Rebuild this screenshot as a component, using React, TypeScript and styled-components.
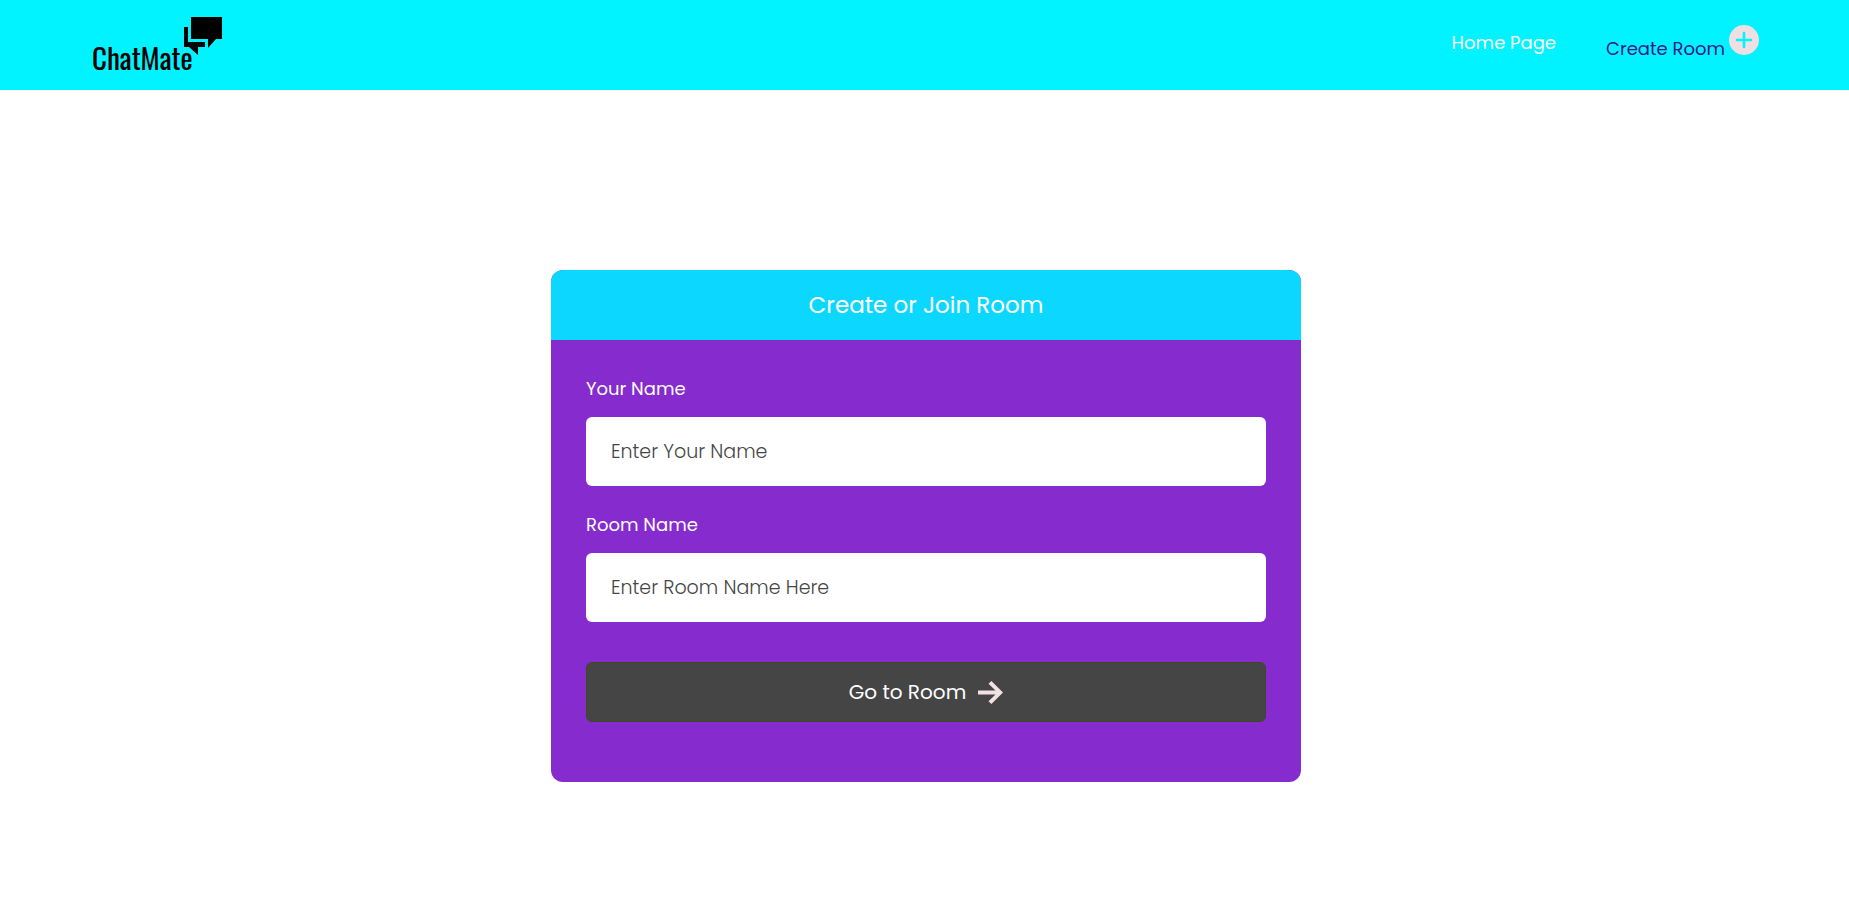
import React from "react";
import styled, { createGlobalStyle } from "styled-components";

const GlobalStyle = createGlobalStyle`
  *, *::before, *::after { box-sizing: border-box; }
  body {
    margin: 0;
    background: #ffffff;
    font-family: Poppins, Inter, sans-serif;
    font-size: 18px;
    line-height: 24px;
  }
`;

const Header = styled.header`
  display: flex;
  align-items: center;
  justify-content: space-between;
  height: 90px;
  padding: 0 90px 0 92px;
  background: #00f3ff;
`;

const Logo = styled.a`
  display: flex;
  align-items: flex-start;
  padding-top: 2px;
  color: #000000;
  text-decoration: none;
`;

const LogoText = styled.span`
  margin-top: 22px;
  font-family: Oswald, "Liberation Sans Narrow", "Liberation Sans", sans-serif;
  font-size: 29px;
  line-height: 36px;
`;

const LogoMark = styled.svg`
  width: 38px;
  height: 38px;
  margin-left: -9px;
`;

const Nav = styled.nav`
  display: flex;
  align-items: center;
  gap: 50px;
  padding-bottom: 4px;
`;

const NavLink = styled.a<{ $tone: string }>`
  display: flex;
  align-items: flex-end;
  gap: 4px;
  color: ${({ $tone }) => $tone};
  text-decoration: none;
  white-space: nowrap;
`;

const PlusBadge = styled.svg`
  width: 30px;
  height: 30px;
  margin-bottom: 6px;
`;

const Main = styled.main`
  display: flex;
  justify-content: center;
  padding: 180px 16px 64px 19px;
`;

const Card = styled.section`
  width: 100%;
  max-width: 750px;
  border-radius: 12px;
  overflow: hidden;
  background: #862bcd;
`;

const CardTitle = styled.h1`
  margin: 0;
  padding: 20px 24px;
  background: #0cd7ff;
  color: #ffffff;
  font-size: 23px;
  font-weight: 400;
  line-height: 30px;
  text-align: center;
`;

const Form = styled.form`
  display: flex;
  flex-direction: column;
  padding: 37px 35px 60px;
`;

const Field = styled.div`
  display: flex;
  flex-direction: column;
  gap: 16px;
  margin-bottom: 27px;
`;

const Label = styled.label`
  color: #ffffff;
`;

const TextInput = styled.input`
  width: 100%;
  height: 69px;
  padding: 0 25px;
  border: 0;
  border-radius: 6px;
  background: #ffffff;
  color: #454545;
  font-family: inherit;
  font-size: 19px;
  font-weight: 300;

  &::placeholder {
    color: #454545;
    opacity: 1;
  }
`;

const SubmitButton = styled.button`
  display: flex;
  align-items: center;
  justify-content: center;
  gap: 12px;
  height: 60px;
  margin-top: 13px;
  border: 1px solid #3c4a22;
  border-radius: 6px;
  background: #454545;
  color: #ffffff;
  font-family: inherit;
  font-size: 20px;
  cursor: pointer;
`;

const Arrow = styled.svg`
  width: 25px;
  height: 23px;
`;

export default function App() {
  return (
    <>
      <GlobalStyle />
      <Header>
        <Logo href="#">
          <LogoText>ChatMate</LogoText>
          <LogoMark viewBox="0 0 38 38" aria-hidden="true">
            <path d="M7 0H38V22H32L24 31V22H7Z" />
            <path d="M0 10H4V25H21V30H14V38L5 30H0Z" />
          </LogoMark>
        </Logo>
        <Nav>
          <NavLink href="#" $tone="#ffffff">Home Page</NavLink>
          <NavLink href="#" $tone="#31188a">
            Create Room
            <PlusBadge viewBox="0 0 30 30" aria-hidden="true">
              <circle cx="15" cy="15" r="15" fill="#eee0e2" />
              <path d="M15 8V22M8 15H22" stroke="#00f3ff" strokeWidth="2.6" strokeLinecap="round" />
            </PlusBadge>
          </NavLink>
        </Nav>
      </Header>
      <Main>
        <Card>
          <CardTitle>Create or Join Room</CardTitle>
          <Form onSubmit={(event) => event.preventDefault()}>
            <Field>
              <Label htmlFor="name">Your Name</Label>
              <TextInput id="name" type="text" placeholder="Enter Your Name" />
            </Field>
            <Field>
              <Label htmlFor="room">Room Name</Label>
              <TextInput id="room" type="text" placeholder="Enter Room Name Here" />
            </Field>
            <SubmitButton type="submit">
              Go to Room
              <Arrow viewBox="0 0 25 23" aria-hidden="true">
                <path
                  d="M0 9.5H17.5L10.5 2.7L13.4 0L25 11.5L13.4 23L10.5 20.3L17.5 13.5H0Z"
                  fill="#f1e2e3"
                />
              </Arrow>
            </SubmitButton>
          </Form>
        </Card>
      </Main>
    </>
  );
}
